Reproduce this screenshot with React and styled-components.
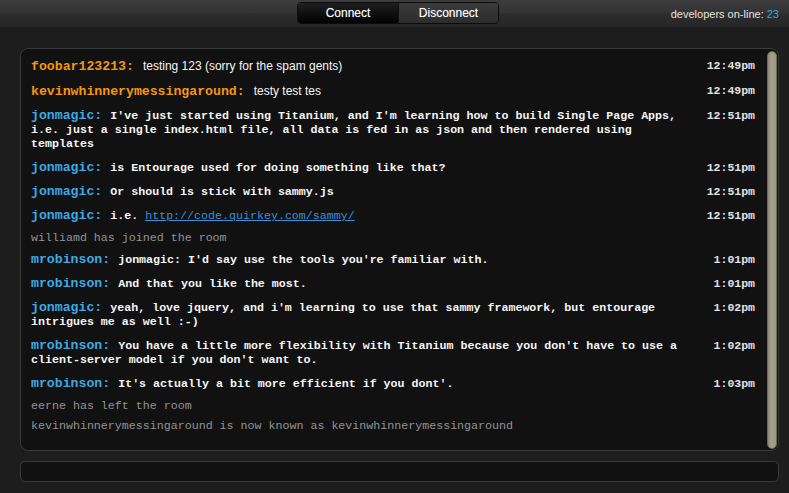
import React from "react";
import styled, { createGlobalStyle } from "styled-components";

const GlobalStyle = createGlobalStyle`
  html, body { margin: 0; padding: 0; }
  body {
    background: #1d1d1d;
    font-family: "Liberation Sans", Arial, sans-serif;
    width: 789px;
    height: 493px;
    overflow: hidden;
  }
`;

const MONO = `"Liberation Mono", "Courier New", monospace`;

const Page = styled.div`
  width: 789px;
  height: 493px;
  display: flex;
  flex-direction: column;
`;

const Header = styled.header`
  height: 27px;
  box-sizing: border-box;
  padding: 2px 10px 0 17px;
  display: grid;
  grid-template-columns: 1fr auto 1fr;
  align-items: start;
  background: linear-gradient(
    to bottom,
    #3d3d3d 0%,
    #333333 48%,
    #2c2c2c 52%,
    #272727 100%
  );
`;

const ButtonGroup = styled.div`
  grid-column: 2;
  display: flex;
  height: 22px;
  box-sizing: border-box;
  border: 1px solid #0c0c0c;
  border-radius: 4px;
  overflow: hidden;
`;

const SegButton = styled.button`
  width: ${(p) => p.$w}px;
  height: 20px;
  margin: 0;
  padding: 0;
  border: none;
  border-left: ${(p) => (p.$first ? "none" : "1px solid #111")};
  color: #fff;
  font-family: "Liberation Sans", Arial, sans-serif;
  font-size: 12px;
  text-shadow: 0 0 1px rgba(255, 255, 255, 0.35);
  background: ${(p) =>
    p.$active
      ? "linear-gradient(to bottom, #1f1f1f, #020202)"
      : "linear-gradient(to bottom, #3b3b3b, #2c2c2c)"};
  cursor: pointer;
`;

const Online = styled.div`
  grid-column: 3;
  justify-self: end;
  align-self: center;
  margin-top: -1px;
  color: #e4e4e4;
  font-size: 11px;
`;

const Count = styled.span`
  color: #3aa8e2;
`;

const Main = styled.main`
  flex: 1;
  padding: 21px 10px 0 20px;
  display: flex;
  flex-direction: column;
  gap: 10px;
`;

const ChatPanel = styled.section`
  height: 403px;
  box-sizing: border-box;
  border: 1px solid #3a3a3a;
  border-radius: 8px;
  background: #111111;
  display: flex;
  overflow: hidden;
`;

const MessageList = styled.div`
  flex: 1;
  padding: 5px 11px 0 10px;
  overflow: hidden;
`;

const Track = styled.div`
  width: 12px;
  box-sizing: border-box;
  padding: 2px 1px 1px 1px;
  display: flex;
`;

const Thumb = styled.div`
  flex: 1;
  border-radius: 6px;
  border: 1px solid #6d6a5c;
  background: linear-gradient(to right, #8e8a78, #a4a08c 45%, #9a9683);
`;

const Row = styled.div`
  display: grid;
  grid-template-columns: 1fr 58px;
  column-gap: 8px;
  padding: 5px 0;
  line-height: 14px;
`;

const Body = styled.div`
  color: #f6f6f6;
  font-family: ${(p) => (p.$sans ? `"Liberation Sans", Arial, sans-serif` : MONO)};
  font-size: ${(p) => (p.$sans ? "12px" : "11.65px")};
  font-weight: ${(p) => (p.$sans ? 400 : 700)};
`;

const Name = styled.span`
  font-family: ${MONO};
  font-size: 13.2px;
  font-weight: 700;
  color: ${(p) => p.$color};
  margin-right: ${(p) => (p.$sans ? "9px" : "8px")};
`;

const Link = styled.a`
  color: #3d8fd6;
  font-weight: 400;
  text-decoration: underline;
`;

const Time = styled.div`
  text-align: right;
  font-family: ${MONO};
  font-size: 11.5px;
  font-weight: 700;
  color: #e2e2e2;
`;

const SystemLine = styled.div`
  padding: 3px 0;
  line-height: 14px;
  font-family: ${MONO};
  font-size: 11.65px;
  color: #939393;
`;

const InputBox = styled.input`
  height: 21px;
  box-sizing: border-box;
  border: 1px solid #3a3a3a;
  border-radius: 5px;
  background: #111111;
  color: #eee;
  outline: none;
  padding: 0 8px;
  font-family: ${MONO};
`;

const ORANGE = "#f5960f";
const BLUE = "#3ea9e2";

const messages = [
  { name: "foobar123213", color: ORANGE, sans: true, text: "testing 123 (sorry for the spam gents)", time: "12:49pm" },
  { name: "kevinwhinnerymessingaround", color: ORANGE, sans: true, text: "testy test tes", time: "12:49pm" },
  {
    name: "jonmagic",
    color: BLUE,
    text: "I've just started using Titanium, and I'm learning how to build Single Page Apps, i.e. just a single index.html file, all data is fed in as json and then rendered using templates",
    time: "12:51pm",
  },
  { name: "jonmagic", color: BLUE, text: "is Entourage used for doing something like that?", time: "12:51pm" },
  { name: "jonmagic", color: BLUE, text: "Or should is stick with sammy.js", time: "12:51pm" },
  { name: "jonmagic", color: BLUE, text: "i.e. ", link: "http://code.quirkey.com/sammy/", time: "12:51pm" },
  { system: "williamd has joined the room" },
  { name: "mrobinson", color: BLUE, text: "jonmagic: I'd say use the tools you're familiar with.", time: "1:01pm" },
  { name: "mrobinson", color: BLUE, text: "And that you like the most.", time: "1:01pm" },
  {
    name: "jonmagic",
    color: BLUE,
    text: "yeah, love jquery, and i'm learning to use that sammy framework, but entourage intrigues me as well :-)",
    time: "1:02pm",
  },
  {
    name: "mrobinson",
    color: BLUE,
    text: "You have a little more flexibility with Titanium because you don't have to use a client-server model if you don't want to.",
    time: "1:02pm",
  },
  { name: "mrobinson", color: BLUE, text: "It's actually a bit more efficient if you dont'.", time: "1:03pm" },
  { system: "eerne has left the room" },
  { system: "kevinwhinnerymessingaround is now known as kevinwhinnerymessingaround" },
];

export default function App() {
  return (
    <Page>
      <GlobalStyle />
      <Header>
        <ButtonGroup>
          <SegButton $first $active $w={100}>Connect</SegButton>
          <SegButton $w={100}>Disconnect</SegButton>
        </ButtonGroup>
        <Online>
          developers on-line: <Count>23</Count>
        </Online>
      </Header>
      <Main>
        <ChatPanel>
          <MessageList>
            {messages.map((m, i) =>
              m.system ? (
                <SystemLine key={i}>{m.system}</SystemLine>
              ) : (
                <Row key={i}>
                  <Body $sans={m.sans}>
                    <Name $color={m.color} $sans={m.sans}>{m.name}:</Name>
                    {m.text}
                    {m.link && <Link href={m.link}>{m.link}</Link>}
                  </Body>
                  <Time>{m.time}</Time>
                </Row>
              )
            )}
          </MessageList>
          <Track>
            <Thumb />
          </Track>
        </ChatPanel>
        <InputBox type="text" />
      </Main>
    </Page>
  );
}
